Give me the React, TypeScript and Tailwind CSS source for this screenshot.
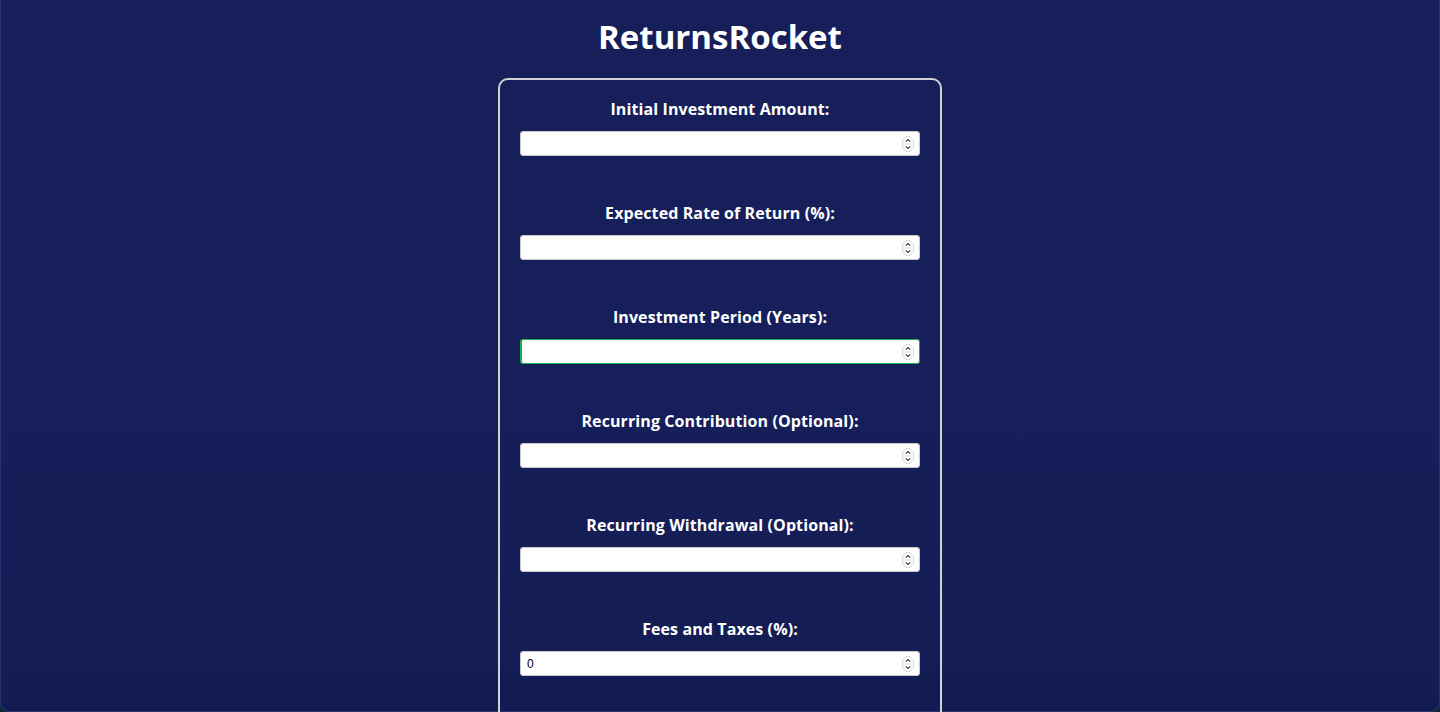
import React from "react";

const fields = [
  { label: "Initial Investment Amount:", value: "" },
  { label: "Expected Rate of Return (%):", value: "" },
  { label: "Investment Period (Years):", value: "", focused: true },
  { label: "Recurring Contribution (Optional):", value: "" },
  { label: "Recurring Withdrawal (Optional):", value: "" },
  { label: "Fees and Taxes (%):", value: "0" },
];

const Spinner = () => (
  <svg width="12" height="16" viewBox="0 0 12 16" className="absolute right-[6px] top-1/2 -translate-y-1/2">
    <rect x="0.5" y="0.5" width="11" height="15" rx="5.5" fill="#fff" stroke="#d4d4d4" />
    <line x1="1" y1="8" x2="11" y2="8" stroke="#e2e2e2" />
    <path d="M3.8 5.6 L6 3.6 L8.2 5.6" fill="none" stroke="#333" strokeWidth="1.1" />
    <path d="M3.8 10.4 L6 12.4 L8.2 10.4" fill="none" stroke="#333" strokeWidth="1.1" />
  </svg>
);

const Field = ({ label, value, focused }: { label: string; value: string; focused?: boolean }) => {
  return (
    <div className="flex flex-col items-center">
      <label className="block text-white text-[16px] leading-5 font-bold mb-3 tracking-[0.1px]">{label}</label>
      <div className="relative w-full h-[25px]">
        <input
          type="text"
          defaultValue={value}
          readOnly
          className={
            focused
              ? "block w-full h-[25px] bg-white rounded-[3px] border border-[#1fae4a] border-l-2 pl-[5px] text-[12px] text-black outline-none"
              : "block w-full h-[25px] bg-white rounded-[3px] border border-[#c8c8c8] pl-[6px] text-[12px] text-black outline-none"
          }
          style={{ fontFamily: "'Liberation Sans', Arial, sans-serif" }}
        />
        <Spinner />
      </div>
    </div>
  );
};

export default function App() {
  return (
    <div className="w-full h-[712px] bg-[#0e2a3a] overflow-hidden">
      <div
        className="h-full rounded-b-[10px] border-x border-b border-[#2b3470] bg-gradient-to-b from-[#161f5a] via-[#161f5a] to-[#131c52] flex flex-col items-center"
        style={{ fontFamily: "'Open Sans', 'DejaVu Sans', sans-serif" }}
      >
        <h1 className="text-white text-[33px] leading-[40px] font-bold mt-[17px] mb-[21px] shrink-0">ReturnsRocket</h1>
        <div className="w-[444px] shrink-0 border-2 border-[#d3d3d3] rounded-[10px] px-5 pt-[19px] pb-[80px] flex flex-col gap-[47px]">
          {fields.map((f) => (
            <Field key={f.label} label={f.label} value={f.value} focused={f.focused} />
          ))}
        </div>
      </div>
    </div>
  );
}
